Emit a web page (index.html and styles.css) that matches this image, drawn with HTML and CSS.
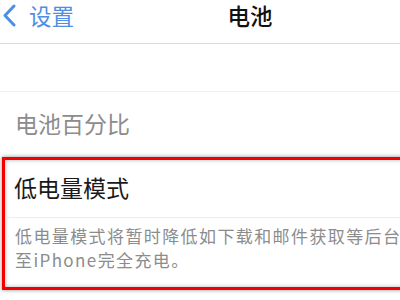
FILE: index.html
```html
<!DOCTYPE html>
<html lang="zh-CN">
<head>
    <meta charset="UTF-8">
    <meta name="viewport" content="width=device-width, initial-scale=1.0">
    <title>电池</title>
    <link rel="stylesheet" href="styles.css">
</head>
<body>
    <div class="viewport">
        <div class="screen">
            <div class="nav-bar">
                <a class="back" href="#">
                    <svg class="chevron" width="16" height="24" viewBox="0 0 16 24">
                        <polyline points="12,3 3,12.5 12,22" fill="none" stroke="#2f7ce0" stroke-width="3" stroke-linecap="round" stroke-linejoin="round"/>
                    </svg>
                    <span>设置</span>
                </a>
                <div class="nav-title">电池</div>
            </div>

            <div class="group-gap"></div>

            <div class="cell cell-muted">电池百分比</div>

            <!-- 标注框 -->
            <div class="highlight">
                <div class="cell cell-main">低电量模式</div>
                <p class="footnote">低电量模式将暂时降低如下载和邮件获取等后台活动，直至iPhone完全充电。</p>
            </div>
        </div>
    </div>
</body>
</html>
```

FILE: styles.css
```css
:root {
    --ios-blue: #2f7ce0;
    --text-main: #1a1a1a;
    --text-muted: #8c8c8c;
    --mark-red: #f20000;
}

body {
    margin: 0;
    background: #fff;
    font-family: "Noto Sans CJK SC", "Noto Sans", sans-serif;
}

.viewport {
    width: 400px;
    height: 300px;
    overflow: hidden;
}

.screen {
    width: 500px;
}

.nav-bar {
    position: relative;
    height: 40px;
    padding-top: 3px;
    border-bottom: 1px solid #d9d9d9;
    display: flex;
    justify-content: center;
    align-items: flex-start;
}

.back {
    position: absolute;
    left: 2px;
    top: 3px;
    display: flex;
    align-items: center;
    gap: 11px;
    color: var(--ios-blue);
    text-decoration: none;
    font-size: 22.5px;
    line-height: 24px;
    opacity: 0.85;
}

.nav-title {
    font-size: 22.5px;
    line-height: 24px;
    font-weight: 500;
    color: #111;
}

.group-gap {
    height: 47px;
    border-bottom: 1px solid #efefef;
}

.cell {
    font-size: 23px;
}

.cell-muted {
    height: 65px;
    line-height: 63px;
    padding-left: 15px;
    color: var(--text-muted);
}

.highlight {
    margin-left: 2px;
    border: 3px solid var(--mark-red);
    box-shadow: 0 0 4px rgba(0, 0, 0, 0.45), inset 0 0 4px rgba(0, 0, 0, 0.3);
}

.cell-main {
    height: 45px;
    padding-top: 12px;
    line-height: 30px;
    padding-left: 9px;
    color: var(--text-main);
    border-bottom: 1px solid #ededed;
}

.footnote {
    margin: 0;
    height: 48px;
    padding: 6px 6px 15px 10px;
    font-size: 17px;
    line-height: 24px;
    letter-spacing: 1.4px;
    color: var(--text-muted);
    overflow: hidden;
}
```
